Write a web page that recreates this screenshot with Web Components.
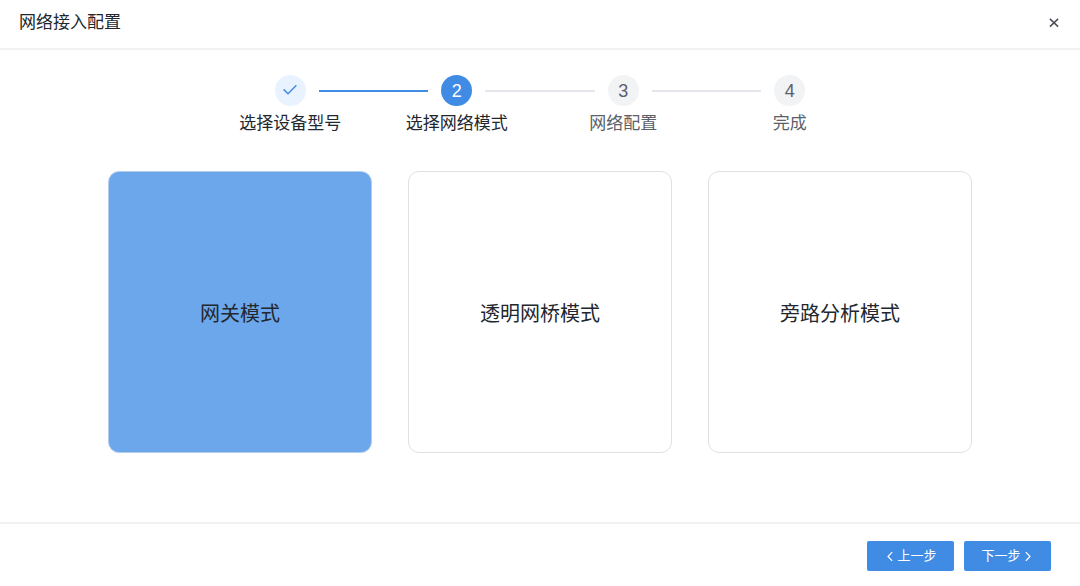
<!DOCTYPE html>
<html lang="zh-CN">
<head>
  <meta charset="UTF-8">
  <meta name="viewport" content="width=device-width, initial-scale=1.0">
  <title>网络接入配置</title>
  <style>
    body {
      margin: 0;
      background: #fff;
      color: #22272e;
      font-family: "Liberation Sans", "Noto Sans CJK SC", sans-serif;
    }
  </style>
</head>
<body>
  <config-wizard>
    <span slot="title">网络接入配置</span>

    <wizard-steps slot="steps">
      <wizard-step state="done" number="1">选择设备型号</wizard-step>
      <wizard-step state="active" number="2">选择网络模式</wizard-step>
      <wizard-step number="3">网络配置</wizard-step>
      <wizard-step number="4">完成</wizard-step>
    </wizard-steps>

    <mode-card selected>网关模式</mode-card>
    <mode-card>透明网桥模式</mode-card>
    <mode-card>旁路分析模式</mode-card>

    <wizard-button slot="actions" arrow="left">上一步</wizard-button>
    <wizard-button slot="actions" arrow="right">下一步</wizard-button>
  </config-wizard>

  <script>
    class ConfigWizard extends HTMLElement {
      constructor() {
        super();
        this.attachShadow({ mode: "open" });
      }

      connectedCallback() {
        this.render();
        this.addEventListener("mode-select", (e) => {
          this.querySelectorAll("mode-card").forEach((card) => {
            card.toggleAttribute("selected", card === e.target);
          });
        });
      }

      render() {
        this.shadowRoot.innerHTML = `
          <style>
            :host {
              display: flex;
              flex-direction: column;
              min-height: 100vh;
            }

            header {
              display: flex;
              align-items: center;
              justify-content: space-between;
              padding: 11px 17px 13px 19px;
              border-bottom: 2px solid #f1f2f3;
            }

            h1 {
              margin: 0;
              font-size: 17px;
              font-weight: 400;
              line-height: 24px;
            }

            .close {
              display: flex;
              padding: 4px;
              border: 0;
              background: none;
              color: #4b5058;
              cursor: pointer;
            }

            main {
              flex: 1;
              display: flex;
              flex-direction: column;
              gap: 35px;
              padding: 25px 10% 69px;
            }

            .cards {
              flex: 1;
              display: grid;
              grid-template-columns: repeat(3, 1fr);
              gap: 36px;
            }

            footer {
              display: flex;
              justify-content: flex-end;
              gap: 10px;
              padding: 17px 29px 15px;
              border-top: 2px solid #f1f2f3;
            }
          </style>

          <header>
            <h1><slot name="title"></slot></h1>
            <button class="close" type="button" aria-label="关闭">
              <svg width="10" height="10" viewBox="0 0 10 10" fill="none" stroke="currentColor" stroke-width="1.5">
                <path d="M0.9 0.9L9.1 8.6M9.1 0.9L0.9 8.6" />
              </svg>
            </button>
          </header>

          <main>
            <slot name="steps"></slot>
            <div class="cards"><slot></slot></div>
          </main>

          <footer><slot name="actions"></slot></footer>
        `;
      }
    }

    class WizardSteps extends HTMLElement {
      constructor() {
        super();
        this.attachShadow({ mode: "open" });
      }

      connectedCallback() {
        this.shadowRoot.innerHTML = `
          <style>
            :host {
              display: grid;
              grid-auto-flow: column;
              grid-auto-columns: 1fr;
              width: 100%;
              max-width: 666px;
              margin: 0 auto;
            }

            /* each connector is two halves, one in either neighbour */
            ::slotted(*) {
              --before: #e5e6eb;
              --after: #e5e6eb;
            }

            ::slotted([state="done"]) {
              --before: #408ce4;
              --after: #408ce4;
            }

            ::slotted([state="active"]) {
              --before: #408ce4;
            }

            ::slotted(:first-child) {
              --before: transparent;
            }

            ::slotted(:last-child) {
              --after: transparent;
            }
          </style>
          <slot></slot>
        `;
      }
    }

    class WizardStep extends HTMLElement {
      constructor() {
        super();
        this.attachShadow({ mode: "open" });
      }

      connectedCallback() {
        this.render();
      }

      render() {
        const done = this.getAttribute("state") === "done";
        const mark = done
          ? `<svg width="14" height="14" viewBox="0 0 14 14" fill="none" stroke="currentColor" stroke-width="1.5">
               <path d="M0.6 5.4L5 9.8L13.4 1.2" />
             </svg>`
          : this.getAttribute("number");

        this.shadowRoot.innerHTML = `
          <style>
            :host {
              display: block;
              color: #5a616b;
            }

            :host([state]) {
              color: #22272e;
            }

            .rail {
              display: flex;
              align-items: center;
              gap: 13px;
            }

            .line {
              flex: 1;
              height: 2px;
              background: var(--before);
            }

            .line.after {
              background: var(--after);
            }

            .circle {
              display: flex;
              align-items: center;
              justify-content: center;
              width: 31px;
              height: 31px;
              border-radius: 50%;
              background: #f2f3f5;
              font-size: 18px;
              line-height: 24px;
            }

            :host([state="done"]) .circle {
              background: #e8f3ff;
              color: #408ce4;
            }

            :host([state="active"]) .circle {
              background: #408ce4;
              color: #fff;
            }

            .label {
              margin-top: 6px;
              font-size: 17px;
              line-height: 24px;
              text-align: center;
            }
          </style>

          <div class="rail">
            <div class="line"></div>
            <div class="circle">${mark}</div>
            <div class="line after"></div>
          </div>
          <div class="label"><slot></slot></div>
        `;
      }
    }

    class ModeCard extends HTMLElement {
      static observedAttributes = ["selected"];

      constructor() {
        super();
        this.attachShadow({ mode: "open" });
      }

      connectedCallback() {
        this.render();
        this.shadowRoot.querySelector("button").addEventListener("click", () => {
          this.dispatchEvent(new CustomEvent("mode-select", { bubbles: true }));
        });
      }

      attributeChangedCallback() {
        const button = this.shadowRoot.querySelector("button");
        if (button) button.setAttribute("aria-pressed", this.hasAttribute("selected"));
      }

      render() {
        this.shadowRoot.innerHTML = `
          <style>
            :host {
              display: flex;
              min-height: 160px;
            }

            button {
              flex: 1;
              padding: 4px 16px 0;
              border: 1px solid #e0e1e3;
              border-radius: 11px;
              background: #fff;
              color: inherit;
              font-family: inherit;
              font-size: 20px;
              line-height: 28px;
              cursor: pointer;
            }

            :host([selected]) button {
              border-color: #b4cdec;
              background: #6da7eb;
            }
          </style>
          <button type="button" aria-pressed="${this.hasAttribute("selected")}"><slot></slot></button>
        `;
      }
    }

    class WizardButton extends HTMLElement {
      constructor() {
        super();
        this.attachShadow({ mode: "open" });
      }

      connectedCallback() {
        this.render();
      }

      render() {
        const left = this.getAttribute("arrow") === "left";
        const arrow = `
          <svg width="13" height="13" viewBox="0 0 13 13" fill="none" stroke="currentColor" stroke-width="1.2">
            <path d="${left ? "M8.2 2.2L4 6.5L8.2 10.8" : "M4.8 2.2L9 6.5L4.8 10.8"}" />
          </svg>`;

        this.shadowRoot.innerHTML = `
          <style>
            :host {
              display: block;
            }

            button {
              display: flex;
              align-items: center;
              justify-content: center;
              min-width: 87px;
              height: 30px;
              padding: 0 16px;
              border: 0;
              border-radius: 2px;
              background: #408ce4;
              color: #fff;
              font-family: inherit;
              font-size: 13px;
              line-height: 20px;
              cursor: pointer;
            }
          </style>
          <button type="button">${left ? arrow : ""}<slot></slot>${left ? "" : arrow}</button>
        `;
      }
    }

    customElements.define("config-wizard", ConfigWizard);
    customElements.define("wizard-steps", WizardSteps);
    customElements.define("wizard-step", WizardStep);
    customElements.define("mode-card", ModeCard);
    customElements.define("wizard-button", WizardButton);
  </script>
</body>
</html>
